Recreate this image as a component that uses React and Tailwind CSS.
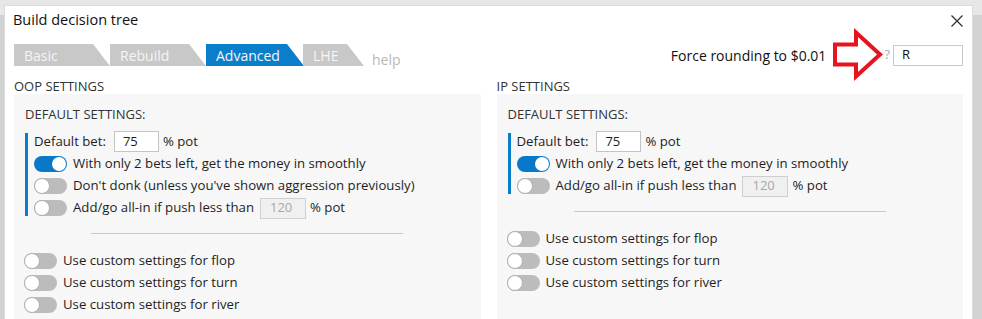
import React from "react";

const F = { fontFamily: '"Open Sans", "Noto Sans", sans-serif' };

function Toggle({ on }) {
  return on ? (
    <div className="w-[33px] h-[16px] rounded-full bg-[#0a78c8] flex items-center justify-end pr-[1px] shrink-0">
      <div className="w-[14px] h-[14px] rounded-full bg-white" />
    </div>
  ) : (
    <div className="w-[33px] h-[16px] rounded-full bg-[#bcbcbc] flex items-center shrink-0">
      <div className="w-[16px] h-[16px] rounded-full bg-white border border-[#b0b0b0]" />
    </div>
  );
}

function ToggleRow({ on, children }) {
  return (
    <div className="h-[22px] flex items-center gap-[6px] text-[13.2px] text-[#1e1e1e]">
      <Toggle on={on} />
      <div className="flex items-center whitespace-nowrap">{children}</div>
    </div>
  );
}

function Tab({ label, active, w }) {
  return (
    <div
      className={`h-[22px] flex items-center pl-[10px] text-[14px] text-[#f5f5f5] ${active ? "bg-[#0a7ecb]" : "bg-[#c8c8c8]"} ${w}`}
      style={{ clipPath: "polygon(0 0, calc(100% - 17px) 0, 100% 100%, 0 100%)" }}
    >
      {label}
    </div>
  );
}

function Panel({ title, dontDonk }) {
  return (
    <div className="flex-1 flex flex-col">
      <div className="h-[16px] leading-[16px] text-[13px] text-[#333] mt-[12px]">{title}</div>
      <div className="flex-1 bg-[#f7f7f7] pl-[10px] pt-[12px]">
        <div className="h-[16px] leading-[16px] text-[13px] text-[#333] pl-[1px]">DEFAULT SETTINGS:</div>
        <div className="flex mt-[8px] pl-[1px]">
          <div className="w-[3px] bg-[#0a7ecb] my-[3px]" />
          <div className="flex flex-col pl-[6px]">
            <div className="h-[23px] flex items-center text-[13.2px] text-[#1e1e1e] whitespace-nowrap">
              <span>Default bet:</span>
              <div className="ml-[8px] w-[45px] h-[21px] bg-white border border-[#c4c4c4] flex items-center pl-[8px] text-[13px]">75</div>
              <span className="ml-[4px]">% pot</span>
            </div>
            <ToggleRow on>With only 2 bets left, get the money in smoothly</ToggleRow>
            {dontDonk && <ToggleRow>Don't donk (unless you've shown aggression previously)</ToggleRow>}
            <ToggleRow>
              Add/go all-in if push less than
              <div className="ml-[6px] w-[46px] h-[21px] bg-[#f0f0f0] border border-[#cfcfcf] flex items-center pl-[9px] text-[13px] text-[#a8a8a8]">120</div>
              <span className="ml-[4px]">% pot</span>
            </ToggleRow>
          </div>
        </div>
        <div className="mt-[14px] mx-auto w-[312px] h-[1px] bg-[#c8c8c8] relative left-[-5px]" />
        <div className="mt-[16px] flex flex-col">
          <ToggleRow>Use custom settings for flop</ToggleRow>
          <ToggleRow>Use custom settings for turn</ToggleRow>
          <ToggleRow>Use custom settings for river</ToggleRow>
        </div>
      </div>
    </div>
  );
}

export default function App() {
  return (
    <div className="w-[982px] h-[319px] bg-[#e7e7e7] flex pt-[5px] overflow-hidden" style={F}>
      <div className="w-[4px] mt-[10px] bg-[#d2d2d2]" />
      <div className="w-[969px] bg-white border-l border-t border-r border-[#dcdcdc] flex flex-col">
        <div className="h-[28px] flex items-center justify-between pl-[8px] pr-[9px]">
          <span className="text-[14.5px] text-[#111]">Build decision tree</span>
          <svg width="12" height="12" viewBox="0 0 12 12" className="mt-[1px]">
            <path d="M0.5 0.5 L11.5 11.5 M11.5 0.5 L0.5 11.5" stroke="#333" strokeWidth="1.3" />
          </svg>
        </div>
        <div className="mt-[10px] h-[22px] flex items-center pl-[9px] pr-[9px]">
          <Tab label="Basic" w="w-[96px]" />
          <Tab label="Rebuild" w="w-[96px]" />
          <Tab label="Advanced" active w="w-[98px]" />
          <div className="ml-[-1px]">
            <Tab label="LHE" w="w-[61px]" />
          </div>
          <span className="ml-[8px] mt-[8px] text-[14px] text-[#b8b8b8]">help</span>
          <div className="flex-1" />
          <span className="text-[14px] text-[#111] whitespace-nowrap">Force rounding to $0.01</span>
          <svg width="56" height="54" viewBox="0 0 56 54" className="ml-[5px] my-[-16px] shrink-0">
            <polygon
              points="4,16.5 25,16.5 25,4.5 49,26.5 25,48.5 25,36.5 4,36.5"
              fill="white"
              stroke="#e5141f"
              strokeWidth="4"
              strokeLinejoin="miter"
            />
          </svg>
          <span className="ml-[-3px] text-[13px] text-[#a8a8a8]">?</span>
          <div className="ml-[3px] w-[70px] h-[21px] border border-[#c8c8c8] flex items-center pl-[8px] text-[13px] text-[#111]">R</div>
        </div>
        <div className="flex-1 flex gap-[16px] pl-[9px] pr-[9px]">
          <Panel title="OOP SETTINGS" dontDonk />
          <Panel title="IP SETTINGS" />
        </div>
      </div>
      <div className="w-[9px] mt-[10px] bg-[#d2d2d2]" />
    </div>
  );
}
